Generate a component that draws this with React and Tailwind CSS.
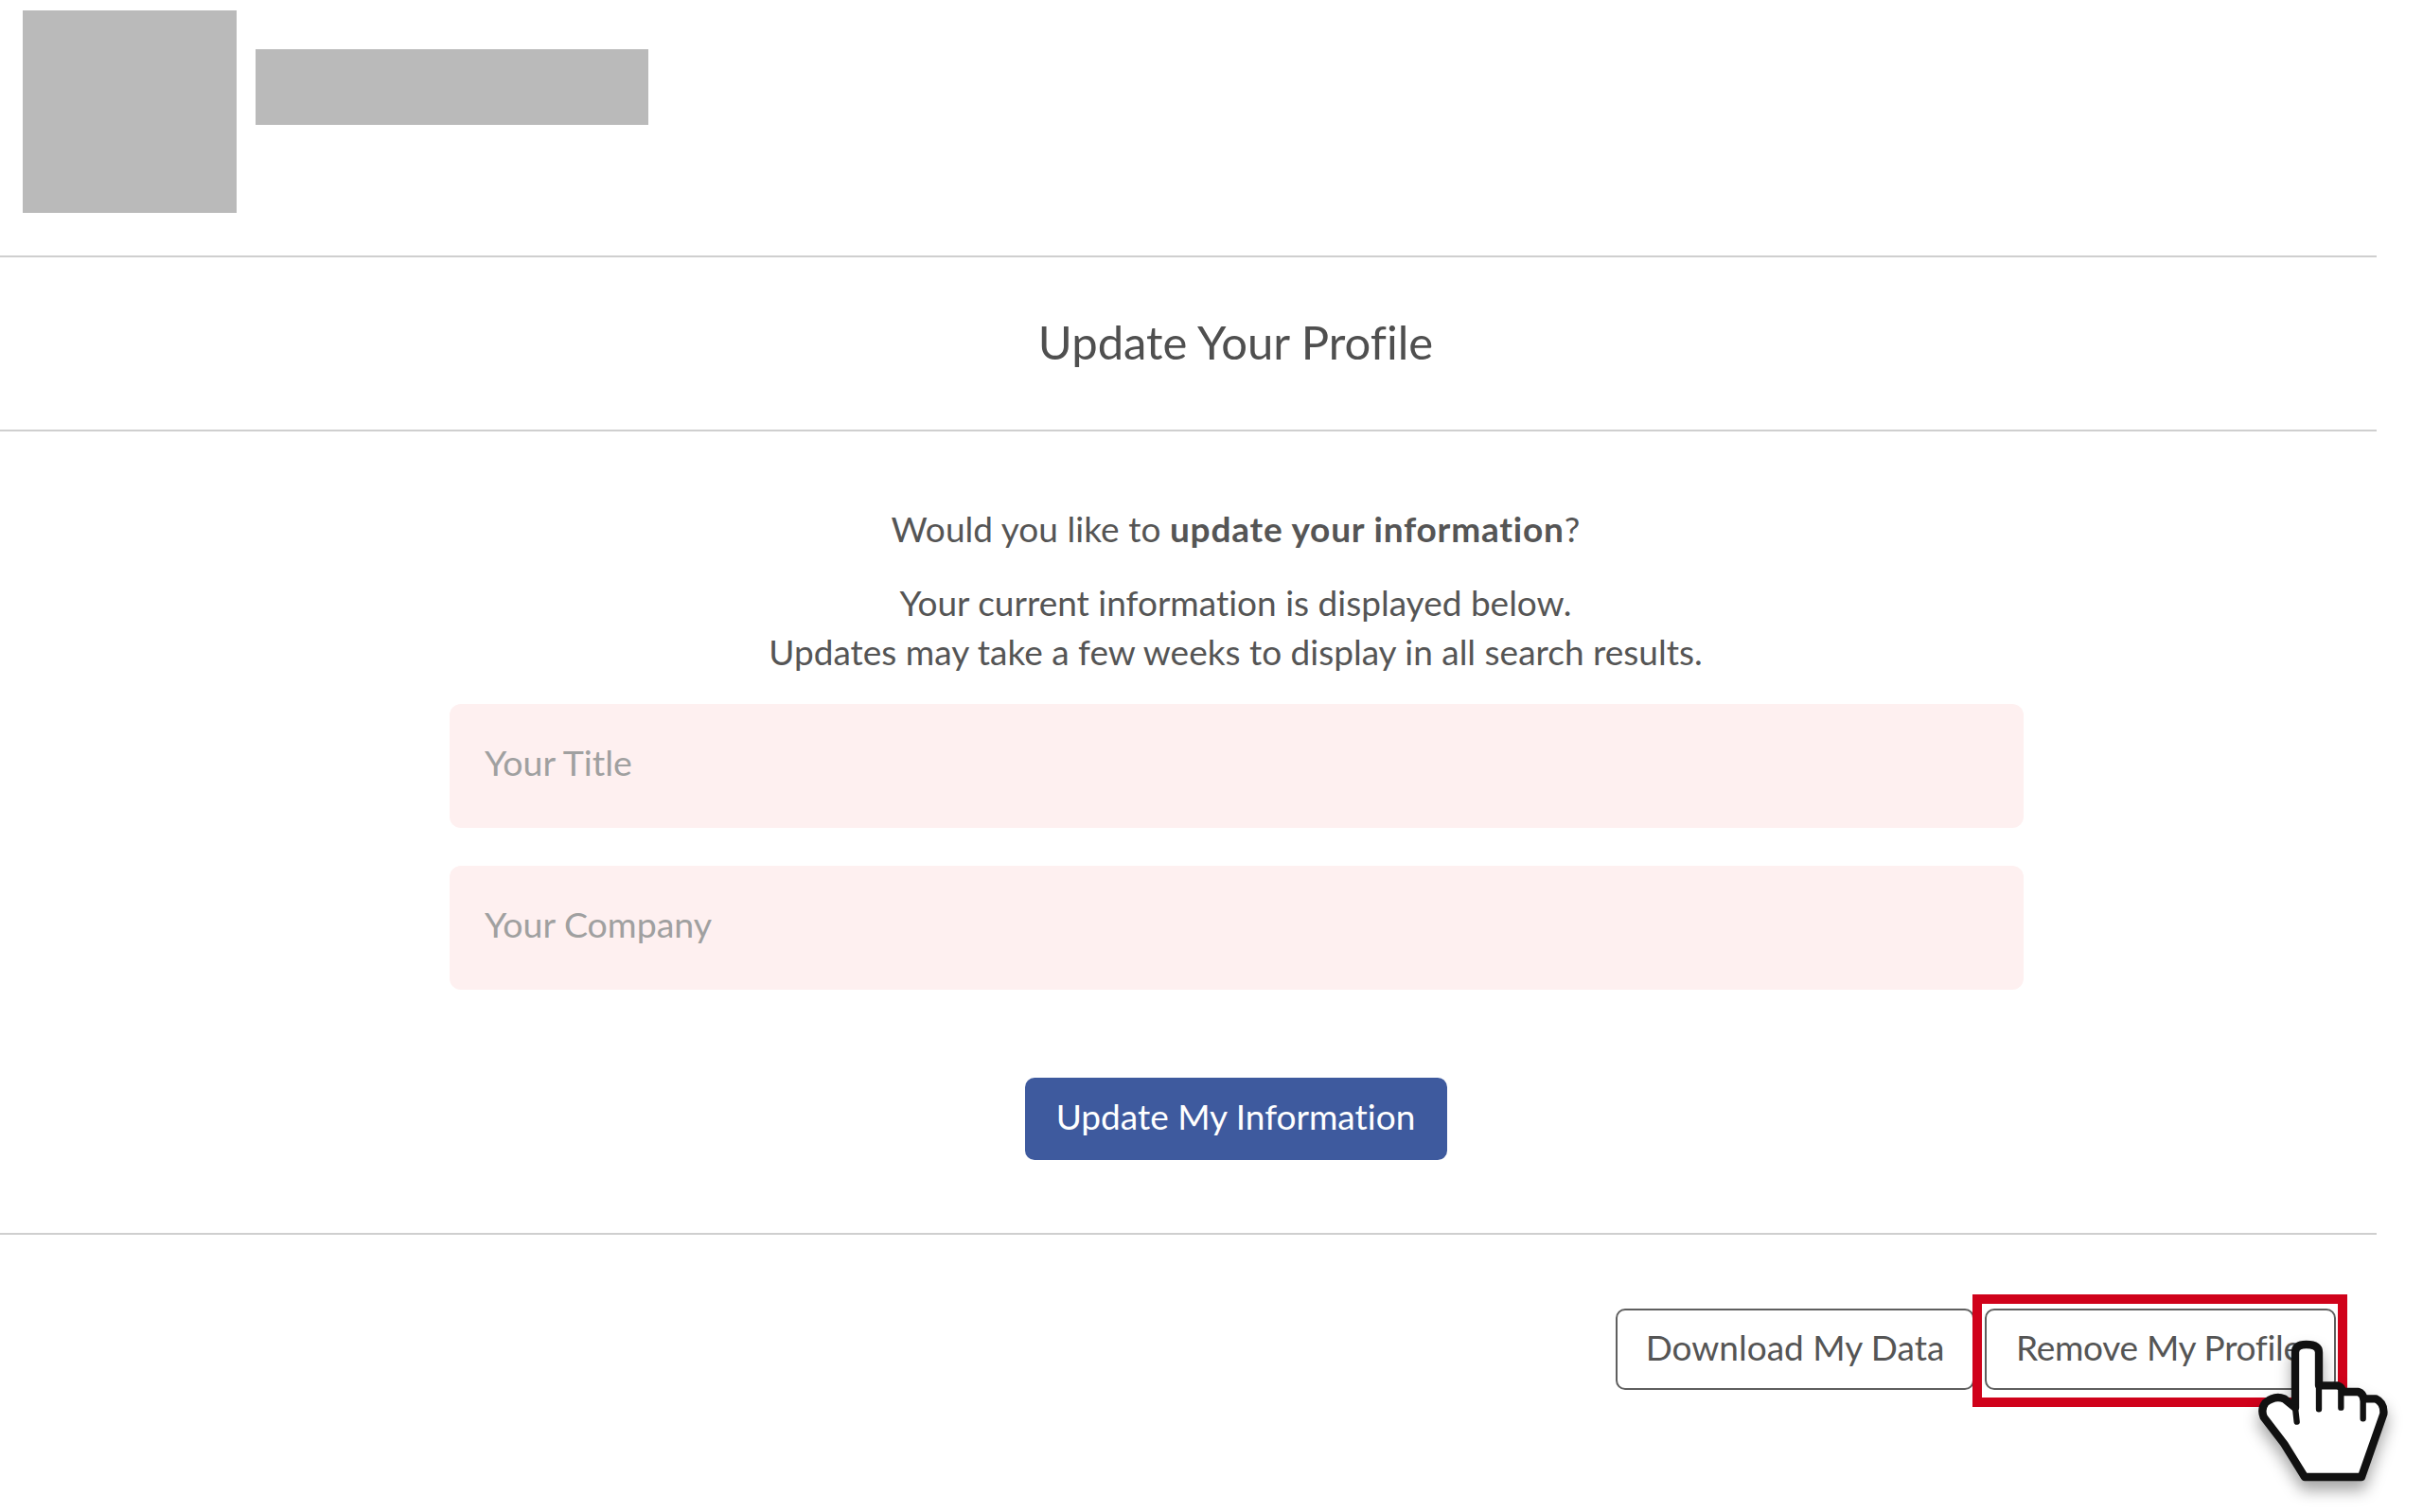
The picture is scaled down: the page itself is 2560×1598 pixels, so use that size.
export default function App() {
  return (
    <div className="w-[2560px] h-[1598px] overflow-hidden bg-white text-[#555555] font-['Lato','Open_Sans',sans-serif] [font-variant-ligatures:none]">
      {/* header placeholders */}
      <header className="w-[2511px] h-[272px] border-b-2 border-[#cfcfcf] flex pl-[24px] pt-[11px] gap-[20px]">
        <div className="w-[226px] h-[214px] bg-[#bababa]" />
        <div className="w-[415px] h-[80px] mt-[41px] bg-[#bababa]" />
      </header>

      <div className="w-[2511px] h-[184px] border-b-2 border-[#cfcfcf] pl-[100px] flex items-center justify-center">
        <h1 className="text-[49px] leading-none text-[#4f4f4f] pb-[4px]">Update Your Profile</h1>
      </div>

      <section className="w-[2511px] h-[849px] border-b-2 border-[#cfcfcf] pl-[100px] flex flex-col items-center pt-[77px]">
        <p className="text-[37px] leading-[52px] tracking-[0.05px]">
          Would you like to <b className="font-bold tracking-[0.8px]">update your information</b>?
        </p>
        <p className="text-[37px] leading-[52px] text-center mt-[26px]">
          Your current information is displayed below.
          <br />
          Updates may take a few weeks to display in all search results.
        </p>
        <form className="w-[1663px] ml-[2px] flex flex-col gap-[40px] mt-[29px]">
          <input
            placeholder="Your Title"
            className="h-[131px] rounded-[12px] bg-[#fef0f0] px-[37px] pb-[9px] text-[37.5px] outline-none placeholder:text-[#a0a0a0]"
          />
          <input
            placeholder="Your Company"
            className="h-[131px] rounded-[12px] bg-[#fef0f0] px-[37px] pb-[9px] text-[37.5px] outline-none placeholder:text-[#a0a0a0]"
          />
        </form>
        <button className="w-[446px] h-[87px] mt-[93px] rounded-[10px] bg-[#3e5a9e] text-white text-[37px] pb-[5px]">
          Update My Information
        </button>
      </section>

      <div className="relative w-[2480px] flex justify-end items-start pt-[63px]">
        <button className="w-[379px] h-[86px] mt-[15px] rounded-[10px] border-2 border-[#5f5f5f] text-[37px] pb-[4px] bg-white">
          Download My Data
        </button>
        <div className="w-[396px] h-[119px] border-[10px] border-[#d0021b] pl-[3px] pt-[5px] -ml-[2px]">
          <button className="w-[371px] h-[86px] rounded-[10px] border-2 border-[#5f5f5f] text-[37px] tracking-[-0.3px] pb-[4px] bg-white text-left pl-[31px] whitespace-nowrap">
            Remove My Profile
          </button>
        </div>
        {/* hand cursor */}
        <svg
          viewBox="0 0 600 624"
          className="absolute left-[2360px] top-[86px] w-[200px] h-[208px] overflow-visible drop-shadow-[0_10px_8px_rgba(0,0,0,0.35)]"
        >
          <path
            d="M195 115 Q195 90 230 90 Q270 90 270 115 L270 220 L330 220 Q345 225 345 240 L395 240 Q410 245 412 262 L450 262 Q478 275 475 310 L405 510 L225 510 L160 405 L95 320 Q85 295 100 275 Q130 250 160 262 L195 290 Z"
            fill="#fff"
            stroke="#111"
            strokeWidth="25"
            strokeLinejoin="round"
          />
          <path
            d="M270 220 L270 295 M340 240 L340 290 M410 262 L410 325 M195 290 L200 335"
            fill="none"
            stroke="#111"
            strokeWidth="19"
            strokeLinecap="round"
          />
        </svg>
      </div>
    </div>
  );
}
